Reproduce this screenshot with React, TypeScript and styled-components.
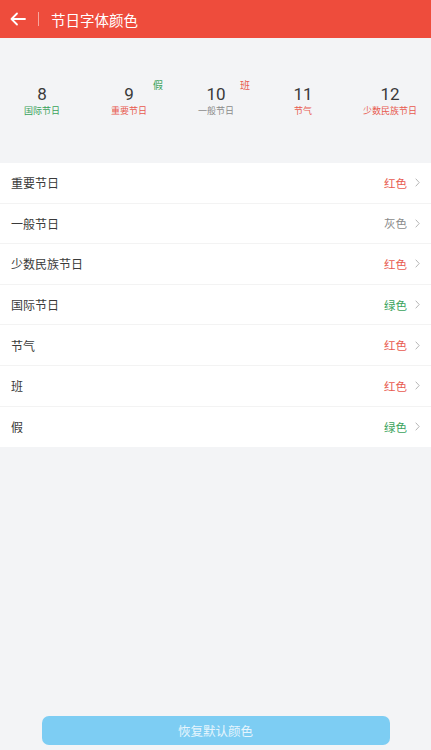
import React from "react";
import styled, { createGlobalStyle } from "styled-components";

const Global = createGlobalStyle`
  html, body { margin: 0; padding: 0; background: #f3f4f6; }
  body { font-family: Roboto, "Noto Sans CJK SC", "Noto Sans", sans-serif; }
  * { box-sizing: border-box; }
`;

const RED = "#e85a4f";
const GREEN = "#3aa35c";
const GRAY = "#8a8a8a";

const Page = styled.div`
  width: 431px;
  height: 750px;
  display: flex;
  flex-direction: column;
  background: #f3f4f6;
  overflow: hidden;
`;

const Header = styled.div`
  height: 38px;
  background: #ee4c3c;
  display: flex;
  align-items: center;
  padding-left: 10px;
  color: #fff;
  flex-shrink: 0;
`;

const Divider = styled.div`
  width: 1px;
  height: 14px;
  background: rgba(255, 255, 255, 0.5);
  margin: 0 12px 0 12px;
`;

const Title = styled.div`
  font-size: 14.5px;
  color: #fff;
`;

const Preview = styled.div`
  height: 125px;
  display: grid;
  grid-template-columns: repeat(5, 87px);
  align-items: center;
  margin-left: -1.5px;
`;

const Day = styled.div`
  position: relative;
  display: flex;
  flex-direction: column;
  align-items: center;
`;

const Num = styled.div`
  font-size: 17px;
  color: #3a3a3a;
  line-height: 20px;
`;

const Label = styled.div<{ $c: string }>`
  font-size: 9px;
  line-height: 12px;
  margin-top: 1px;
  color: ${(p) => p.$c};
`;

const Badge = styled.span<{ $c: string }>`
  position: absolute;
  top: -7px;
  left: calc(50% + 24px);
  font-size: 10px;
  color: ${(p) => p.$c};
`;

const List = styled.div`
  background: #fff;
  display: flex;
  flex-direction: column;
`;

const Row = styled.div<{ $last?: boolean }>`
  height: 40.6px;
  display: flex;
  align-items: center;
  padding: 0 11px 0 11px;
  border-bottom: ${(p) => (p.$last ? "none" : "1px solid #f3f3f3")};
`;

const RowLabel = styled.div`
  flex: 1;
  font-size: 12px;
  color: #3a3a3a;
`;

const Value = styled.div<{ $c: string }>`
  font-size: 11.5px;
  color: ${(p) => p.$c};
`;

const Chevron = styled.svg`
  margin-left: 8px;
`;

const Spacer = styled.div`
  flex: 1;
`;

const Footer = styled.div`
  display: flex;
  justify-content: center;
  padding-bottom: 5px;
`;

const Button = styled.div`
  width: 348px;
  height: 29px;
  border-radius: 7px;
  background: #7dcdf3;
  color: #e6f5fd;
  font-size: 12.5px;
  display: flex;
  align-items: center;
  justify-content: center;
`;

const days = [
  { n: "8", l: "国际节日", c: GREEN },
  { n: "9", l: "重要节日", c: RED, b: "假", bc: GREEN },
  { n: "10", l: "一般节日", c: GRAY, b: "班", bc: RED },
  { n: "11", l: "节气", c: RED },
  { n: "12", l: "少数民族节日", c: RED },
];

const rows = [
  { l: "重要节日", v: "红色", c: RED },
  { l: "一般节日", v: "灰色", c: GRAY },
  { l: "少数民族节日", v: "红色", c: RED },
  { l: "国际节日", v: "绿色", c: GREEN },
  { l: "节气", v: "红色", c: RED },
  { l: "班", v: "红色", c: RED },
  { l: "假", v: "绿色", c: GREEN },
];

export default function App() {
  return (
    <Page>
      <Global />
      <Header>
        <svg width="16" height="14" viewBox="0 0 16 14" fill="none" stroke="#fff" strokeWidth="1.8" strokeLinecap="round" strokeLinejoin="round">
          <path d="M15 7H1.5M7 1.5L1.5 7L7 12.5" />
        </svg>
        <Divider />
        <Title>节日字体颜色</Title>
      </Header>
      <Preview>
        {days.map((d) => (
          <Day key={d.n}>
            <Num>{d.n}</Num>
            <Label $c={d.c}>{d.l}</Label>
            {d.b && <Badge $c={d.bc!}>{d.b}</Badge>}
          </Day>
        ))}
      </Preview>
      <List>
        {rows.map((r, i) => (
          <Row key={r.l} $last={i === rows.length - 1}>
            <RowLabel>{r.l}</RowLabel>
            <Value $c={r.c}>{r.v}</Value>
            <Chevron width="5" height="9" viewBox="0 0 5 9" fill="none" stroke="#b5b5b5" strokeWidth="1">
              <path d="M0.7 0.7L4.2 4.5L0.7 8.3" />
            </Chevron>
          </Row>
        ))}
      </List>
      <Spacer />
      <Footer>
        <Button>恢复默认颜色</Button>
      </Footer>
    </Page>
  );
}
